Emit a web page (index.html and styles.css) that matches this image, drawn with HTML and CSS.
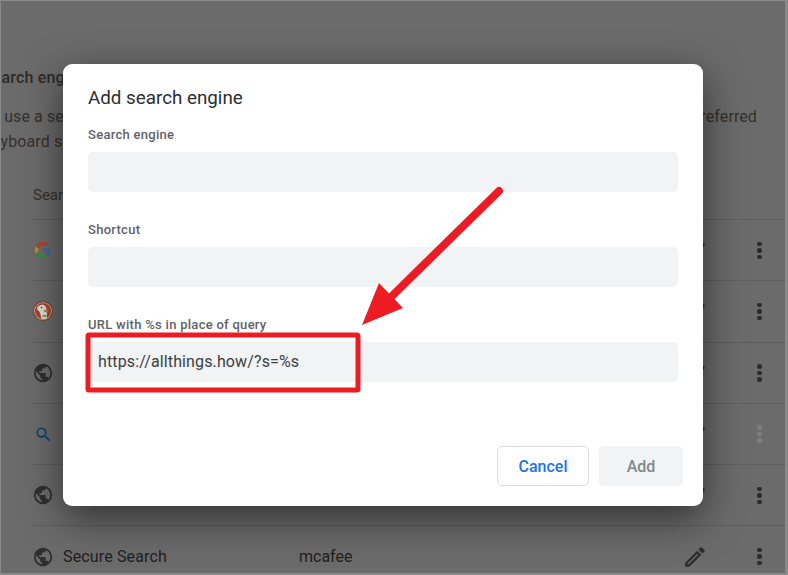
FILE: index.html
```html
<!DOCTYPE html>
<html lang="en">
<head>
<meta charset="utf-8">
<title>Add search engine</title>
<link rel="stylesheet" href="styles.css">
</head>
<body>
<main class="page">
  <h2 class="heading">Search engines</h2>
  <p class="intro"><span>To use a search</span><span>preferred</span></p>
  <p class="intro intro-second">keyboard sh</p>
  <div class="list-title">Search engines</div>
  <ul class="rows">
    <li class="row">
      <svg class="site site-g" viewBox="0 0 48 48"><path fill="#b83f30" d="M24 9.500c3.540 0 6.710 1.220 9.210 3.600l6.850-6.850C35.900 2.380 30.470 0 24 0 14.620 0 6.510 5.380 2.560 13.220l7.980 6.190C12.430 13.720 17.740 9.500 24 9.500z"/><path fill="#3a68aa" d="M46.980 24.550c0-1.570-.15-3.090-.38-4.550H24v9.020h12.940c-.58 2.960-2.260 5.480-4.780 7.180l7.730 6c4.510-4.180 7.090-10.360 7.090-17.650z"/><path fill="#bd9722" d="M10.530 28.590c-.48-1.450-.76-2.990-.76-4.590s.270-3.140.760-4.590l-7.980-6.190C.920 16.460 0 20.120 0 24c0 3.880.920 7.540 2.560 10.780l7.970-6.190z"/><path fill="#3b8a4f" d="M24 48c6.480 0 11.930-2.130 15.890-5.810l-7.730-6c-2.150 1.450-4.920 2.300-8.160 2.300-6.260 0-11.570-4.220-13.470-9.910l-7.980 6.190C6.510 42.620 14.620 48 24 48z"/></svg>
      <button class="edit"><svg viewBox="0 0 24 24"><use href="#pencil"/></svg></button><span class="kebab"><i></i><i></i><i></i></span>
    </li>
    <li class="row">
      <svg class="site site-duck" viewBox="0 0 20 20"><circle cx="10" cy="10" r="10" fill="#8f3d28"/><circle cx="10" cy="10" r="8.800" fill="#c9c4bc"/><circle cx="10" cy="10" r="8.100" fill="#a5462d"/><path fill="#dcdcd8" d="M4.200 7c.8-3.500 6.500-4.600 8.500-1.500 1 1.500.6 3 .9 4.500.4 2.500.6 4.500.3 7.400-2 .8-4 .8-5.700.2-.2-3-.8-5-1.900-7C5 9.500 3.900 8.500 4.200 7z"/><path fill="#b58a2a" d="M10.500 9.500c1.500-1 4-1.200 5.400-.5-.4 1.200-1.600 1.800-3 2.100-1 .2-2-.6-2.400-1.600z"/><path fill="#6d9a3e" d="M9.500 14h4v1.800h-4z"/><circle cx="8.500" cy="6.500" r=".8" fill="#333"/></svg>
      <button class="edit"><svg viewBox="0 0 24 24"><use href="#pencil"/></svg></button><span class="kebab"><i></i><i></i><i></i></span>
    </li>
    <li class="row">
      <svg class="site" viewBox="0 0 24 24"><use href="#globe"/></svg>
      <button class="edit"><svg viewBox="0 0 24 24"><use href="#pencil"/></svg></button><span class="kebab"><i></i><i></i><i></i></span>
    </li>
    <li class="row">
      <svg class="site site-search" viewBox="0 0 24 24"><path fill="#0e3f6e" d="M15.500 14h-.79l-.28-.27A6.470 6.470 0 0 0 16 9.500 6.500 6.500 0 1 0 9.500 16c1.610 0 3.090-.59 4.230-1.570l.27.28v.79l5 4.990L20.490 19l-4.990-5zm-6 0C7.010 14 5 11.990 5 9.500S7.010 5 9.500 5 14 7.010 14 9.500 11.990 14 9.500 14z"/></svg>
      <button class="edit"><svg viewBox="0 0 24 24"><use href="#pencil"/></svg></button><span class="kebab kebab-dim"><i></i><i></i><i></i></span>
    </li>
    <li class="row">
      <svg class="site" viewBox="0 0 24 24"><use href="#globe"/></svg>
      <button class="edit"><svg viewBox="0 0 24 24"><use href="#pencil"/></svg></button><span class="kebab"><i></i><i></i><i></i></span>
    </li>
    <li class="row">
      <svg class="site" viewBox="0 0 24 24"><use href="#globe"/></svg>
      <span class="name">Secure Search</span><span class="short">mcafee</span>
      <button class="edit"><svg viewBox="0 0 24 24"><use href="#pencil"/></svg></button><span class="kebab"><i></i><i></i><i></i></span>
    </li>
  </ul>
</main>

<section class="dialog">
  <h1 class="dialog-title">Add search engine</h1>
  <div class="field"><label>Search engine</label><div class="input"></div></div>
  <div class="field"><label>Shortcut</label><div class="input"></div></div>
  <div class="field"><label>URL with %s in place of query</label><div class="input">https://allthings.how/?s=%s</div></div>
  <div class="actions"><button class="btn cancel">Cancel</button><button class="btn add">Add</button></div>
</section>

<svg class="annotation" viewBox="0 0 788 575">
  <rect x="88" y="335" width="270" height="55" rx="1" fill="none" stroke="#ed1c24" stroke-width="5"/>
  <line x1="499" y1="191" x2="392" y2="296" stroke="#ed1c24" stroke-width="8" stroke-linecap="round"/>
  <polygon points="362,325 379,283 403,308" fill="#ed1c24"/>
</svg>

<svg class="defs" width="0" height="0">
  <defs>
    <path id="globe" fill="#2f2f2f" d="M12 2a10 10 0 1 0 0 20 10 10 0 0 0 0-20zM4 12c0-.6.100-1.200.2-1.800L9 15v1c0 1.100.9 2 2 2v1.900A8 8 0 0 1 4 12zm13.900 5.400c-.3-.8-1-1.400-1.900-1.400h-1v-3c0-.6-.4-1-1-1H8v-2h2c.6 0 1-.4 1-1V7h2c1.100 0 2-.9 2-2v-.4a8 8 0 0 1 2.900 12.800z"/>
    <path id="pencil" fill="#2b2b2b" d="M3 17.300V21h3.700L17.800 9.900l-3.700-3.700zM5.900 19H5v-.9l9.100-9.100.9.900zM20.700 7a1 1 0 0 0 0-1.400l-2.300-2.300a1 1 0 0 0-1.400 0l-1.800 1.800 3.700 3.700z"/>
  </defs>
</svg>
</body>
</html>
```
FILE: styles.css
```css
* { box-sizing: border-box; }
html, body { margin: 0; height: 100%; }
body {
  position: relative;
  width: 788px;
  height: 575px;
  overflow: hidden;
  background: #6b6b6b;
  font-family: Roboto, "Liberation Sans", sans-serif;
  color: #2b2b2b;
}
.page { height: 575px; padding: 67px 0 0; border: 1px solid #8a8a8a; border-width: 1px 3px 2px 1px; overflow: hidden; }
.heading { margin: 0 0 0 -18px; font-size: 16px; line-height: 20px; font-weight: 500; letter-spacing: .15px; color: #2b2b2b; }
.intro { display: flex; justify-content: space-between; margin: 19px 28px 0 -19px; font-size: 16px; letter-spacing: .1px; line-height: 20px; color: #35302e; }
.intro-second { margin-top: 5px; margin-left: -17px; }
.list-title { margin: 33px 0 0 32px; font-size: 15px; line-height: 20px; color: #35302e; height: 34px; }
.rows { list-style: none; margin: 0 0 0 32px; padding: 0; width: 752px; }
.row { display: flex; align-items: center; height: 61.300px; border-top: 1px solid #5e5e5e; position: relative; }
.site { width: 22px; height: 22px; margin-left: -1px; flex: none; }
.site-g { width: 16px; height: 16px; margin-left: 2px; }
.site-duck { width: 20px; height: 20px; margin-left: 0; }
.site-search { width: 19px; height: 19px; margin-left: 1px; }
.name { margin-left: 9px; width: 236px; font-size: 16px; letter-spacing: .15px; color: #202020; }
.short { font-size: 16px; color: #202020; }
.edit { position: absolute; left: 649px; top: 18px; width: 26px; height: 26px; padding: 0; border: 0; background: none; }
.edit svg { display: block; width: 26px; height: 26px; }
.kebab { position: absolute; left: 724px; top: 21.500px; display: flex; flex-direction: column; gap: 2px; }
.kebab i { width: 4.500px; height: 4.500px; border-radius: 50%; background: #2b2b2b; }
.kebab-dim i { background: #7f7f7f; }

.dialog {
  position: absolute;
  left: 63px;
  top: 64px;
  width: 640px;
  height: 442px;
  padding: 22px 25px 20px;
  background: #fff;
  border-radius: 9px;
  box-shadow: 0 12px 40px rgba(0,0,0,.55);
  display: flex;
  flex-direction: column;
}
.dialog-title { margin: 0 0 16px; font-size: 18.800px; line-height: 24px; font-weight: 400; color: #2c2e30; }
.field { height: 95px; }
.field label { display: block; height: 18px; font-size: 13px; line-height: 18px; font-weight: 500; color: #5f6368; margin-bottom: 8px; letter-spacing: .28px; }
.input { width: 590px; height: 40px; padding: 0 10px; background: #f1f3f4; border-radius: 5px; font-size: 16px; letter-spacing: .13px; line-height: 40px; color: #3c4043; }
.actions { display: flex; justify-content: flex-end; gap: 10px; margin: auto -5px 0 0; }
.btn { height: 40px; border-radius: 5px; font: 500 16px Roboto, "Liberation Sans", sans-serif; padding: 0; }
.cancel { width: 92px; background: #fff; border: 1px solid #dadce0; color: #1a73e8; }
.add { width: 84px; background: #f1f3f4; border: 0; color: #80868b; }

.annotation { position: absolute; left: 0; top: 0; width: 788px; height: 575px; pointer-events: none; }
.defs { position: absolute; }
```
